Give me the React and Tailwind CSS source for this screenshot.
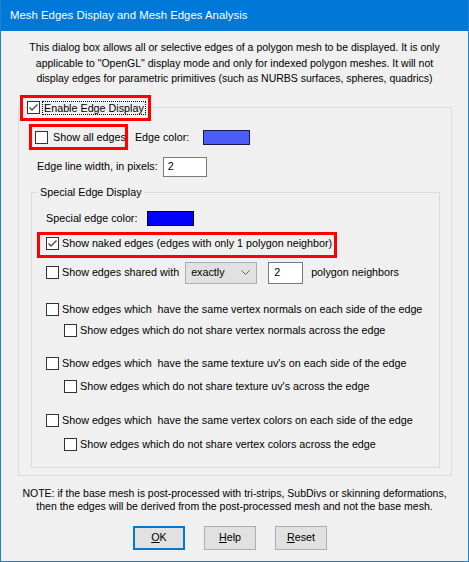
import React from 'react'

const font = { fontFamily: '"Liberation Sans", Arial, sans-serif' }

function Box({ checked }) {
  return (
    <span className="inline-flex w-[13px] h-[13px] shrink-0 border border-[#333333] bg-white items-center justify-center">
      {checked && (
        <svg width="11" height="11" viewBox="0 0 11 11">
          <path d="M1.5 5.5 L4 8 L9.5 2.5" fill="none" stroke="#555555" strokeWidth="1.5" />
        </svg>
      )}
    </span>
  )
}

function Row({ checked, label, mt, indent, h = 'h-[20px]' }) {
  return (
    <div className={`flex items-center ${h} ${mt} ${indent}`}>
      <Box checked={checked} />
      <span className="ml-[3px] whitespace-pre">{label}</span>
    </div>
  )
}

function Red({ className }) {
  return <span className={`absolute border-[3px] border-[#ff0000] pointer-events-none ${className}`} />
}

export default function App() {
  return (
    <div className="w-[469px] h-[562px] bg-[#f0f0f0] border-x border-b border-[#1883d7] text-[10.75px] text-black overflow-hidden" style={font}>
      <div className="h-[31px] bg-[#0078d7] flex items-center pl-[9px] text-white text-[11.4px]">
        Mesh Edges Display and Mesh Edges Analysis
      </div>

      <p className="mt-[9px] text-center leading-[15.5px] text-[10.5px] px-[4px]">
        This dialog box allows all or selective edges of a polygon mesh to be displayed. It is only
        <br />
        applicable to "OpenGL" display mode and only for indexed polygon meshes. It will not
        <br />
        display edges for parametric primitives (such as NURBS surfaces, spheres, quadrics)
      </p>

      <fieldset className="mt-[14px] ml-[17px] w-[434px] border border-[#dcdcdc] pb-[7px]">
        <legend className="relative ml-[8px] h-[14px] flex items-center">
          <Box checked />
          <span className="ml-[2px] border border-dotted border-black leading-[12px] px-[1px]">Enable Edge Display</span>
          <Red className="-left-[7px] -top-[6px] w-[131px] h-[26px]" />
        </legend>

        <div className="relative mt-[13px] ml-[16px] h-[19px] flex items-center">
          <Box />
          <span className="ml-[5px]">Show all edges.</span>
          <span className="ml-[6px]">Edge color:</span>
          <span className="ml-[14px] w-[47px] h-[15px] bg-[#4b5cfb] border border-[#1a1a4a]" />
          <Red className="-left-[6px] -top-[4px] w-[99px] h-[26px]" />
        </div>

        <div className="mt-[10px] ml-[18px] h-[20px] flex items-center">
          <span>Edge line width, in pixels:</span>
          <span className="ml-[5px] w-[44px] h-[20px] bg-white border border-[#7a7a7a] flex items-center pl-[4px]">2</span>
        </div>

        <fieldset className="mt-[9px] ml-[12px] w-[409px] border border-[#dcdcdc] pb-[12px]">
          <legend className="ml-[6px] px-[2px] leading-[13px]">Special Edge Display</legend>

          <div className="mt-[12px] ml-[14px] h-[15px] flex items-center">
            <span>Special edge color:</span>
            <span className="ml-[10px] w-[47px] h-[15px] bg-[#0000ff] border border-black" />
          </div>

          <div className="relative mt-[8px] ml-[14px] h-[20px] flex items-center">
            <Box checked />
            <span className="ml-[3px]">Show naked edges (edges with only 1 polygon neighbor)</span>
            <Red className="-left-[9px] -top-[2px] w-[300px] h-[26px]" />
          </div>

          <div className="mt-[8px] ml-[14px] h-[22px] flex items-center">
            <Box />
            <span className="ml-[3px]">Show edges shared with</span>
            <span className="ml-[6px] w-[72px] h-[22px] bg-[#e1e1e1] border border-[#adadad] flex items-center justify-between pl-[5px] pr-[6px]">
              exactly
              <svg width="9" height="6" viewBox="0 0 9 6">
                <path d="M0.5 0.5 L4.5 4.5 L8.5 0.5" fill="none" stroke="#606060" strokeWidth="1" />
              </svg>
            </span>
            <span className="ml-[11px] w-[35px] h-[22px] bg-white border border-[#7a7a7a] flex items-center pl-[5px]">2</span>
            <span className="ml-[8px]">polygon neighbors</span>
          </div>

          <Row label="Show edges which  have the same vertex normals on each side of the edge" mt="mt-[16px]" indent="ml-[14px]" />
          <Row label="Show edges which do not share vertex normals across the edge" mt="mt-[1px]" indent="ml-[32px]" />
          <Row label="Show edges which  have the same texture uv's on each side of the edge" mt="mt-[13px]" indent="ml-[14px]" />
          <Row label="Show edges which do not share texture uv's across the edge" mt="mt-[3px]" indent="ml-[32px]" />
          <Row label="Show edges which  have the same vertex colors on each side of the edge" mt="mt-[14px]" indent="ml-[14px]" />
          <Row label="Show edges which do not share vertex colors across the edge" mt="mt-[4px]" indent="ml-[32px]" />
        </fieldset>
      </fieldset>

      <p className="mt-[11px] text-center leading-[13px] text-[10.5px]">
        NOTE: if the base mesh is post-processed with tri-strips, SubDivs or skinning deformations,
        <br />
        then the edges will be derived from the post-processed mesh and not the base mesh.
      </p>

      <div className="mt-[13px] ml-[132px] flex gap-[19px]">
        <button className="w-[52px] h-[24px] bg-[#e1e1e1] border-2 border-[#0078d7]">
          <span className="underline">O</span>K
        </button>
        <button className="w-[52px] h-[24px] bg-[#e1e1e1] border border-[#adadad]">
          <span className="underline">H</span>elp
        </button>
        <button className="w-[52px] h-[24px] bg-[#e1e1e1] border border-[#adadad]">
          <span className="underline">R</span>eset
        </button>
      </div>
    </div>
  )
}
